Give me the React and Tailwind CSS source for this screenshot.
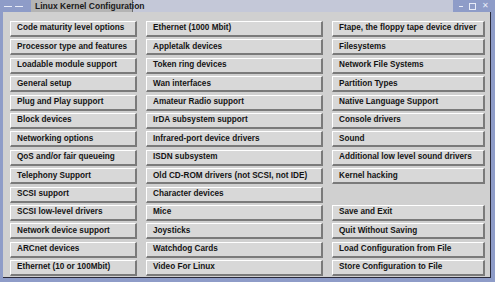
import React from 'react';

const col1 = [
  'Code maturity level options',
  'Processor type and features',
  'Loadable module support',
  'General setup',
  'Plug and Play support',
  'Block devices',
  'Networking options',
  'QoS and/or fair queueing',
  'Telephony Support',
  'SCSI support',
  'SCSI low-level drivers',
  'Network device support',
  'ARCnet devices',
  'Ethernet (10 or 100Mbit)',
];

const col2 = [
  'Ethernet (1000 Mbit)',
  'Appletalk devices',
  'Token ring devices',
  'Wan interfaces',
  'Amateur Radio support',
  'IrDA subsystem support',
  'Infrared-port device drivers',
  'ISDN subsystem',
  'Old CD-ROM drivers (not SCSI, not IDE)',
  'Character devices',
  'Mice',
  'Joysticks',
  'Watchdog Cards',
  'Video For Linux',
];

const col3 = [
  'Ftape, the floppy tape device driver',
  'Filesystems',
  'Network File Systems',
  'Partition Types',
  'Native Language Support',
  'Console drivers',
  'Sound',
  'Additional low level sound drivers',
  'Kernel hacking',
  null,
  'Save and Exit',
  'Quit Without Saving',
  'Load Configuration from File',
  'Store Configuration to File',
];

const MenuButton = ({ label }) => {
  if (!label) return <div className="h-[16px]" />;
  return (
    <button className="h-[16px] w-full text-left pl-[6px] bg-[#d8d8d8] border-t border-l border-t-white border-l-white border-b-2 border-r-2 border-b-[#7a7a7a] border-r-[#7a7a7a] text-[8.2px] font-bold leading-none text-[#141414] whitespace-nowrap overflow-hidden">
      {label}
    </button>
  );
};

const Column = ({ items }) => (
  <div className="grid grid-rows-[repeat(14,16px)] gap-y-[2.4px]">
    {items.map((label, i) => (
      <MenuButton key={i} label={label} />
    ))}
  </div>
);

export default function App() {
  return (
    <div
      className="w-[495px] h-[282px] bg-[#8e9cc8] flex flex-col overflow-hidden"
      style={{ fontFamily: '"Liberation Sans", Arial, sans-serif' }}
    >
      {/* Title bar */}
      <div className="h-[12px] flex items-stretch bg-[#c4c8d8]">
        <div className="w-[31px] bg-[#8e9cc8] flex items-center gap-[3px] pl-[4px]">
          <span className="block w-[8px] h-px bg-[#e8ecf8]" />
          <span className="block w-[8px] h-px bg-[#e8ecf8]" />
        </div>
        <div className="w-[102px] bg-[#b4b4b4] border-r border-[#6a6a6a] flex items-center pl-[4px] text-[8.5px] font-bold text-[#1a1a1a] leading-none whitespace-nowrap">
          Linux Kernel Configuration
        </div>
        <div className="flex-1" />
        <div className="w-[42px] bg-[#8e9cc8] flex items-center justify-around px-[3px] text-[#e8ecf8] text-[8px] leading-none">
          <span className="block w-[4px] h-px bg-[#e8ecf8]" />
          <span className="block w-[7px] h-[7px] border border-[#e8ecf8]" />
          <span>✕</span>
        </div>
      </div>

      {/* Window body */}
      <div className="flex-1 flex pl-[3px] pr-[4px] pb-[4px]">
        <div className="flex-1 bg-[#d0d0d0] border-r border-b border-[#2a2a3a] pl-[7px] pt-[9px]">
          <div className="grid grid-cols-[127px_177px_153px] gap-x-[9px]">
            <Column items={col1} />
            <Column items={col2} />
            <Column items={col3} />
          </div>
        </div>
      </div>
    </div>
  );
}
